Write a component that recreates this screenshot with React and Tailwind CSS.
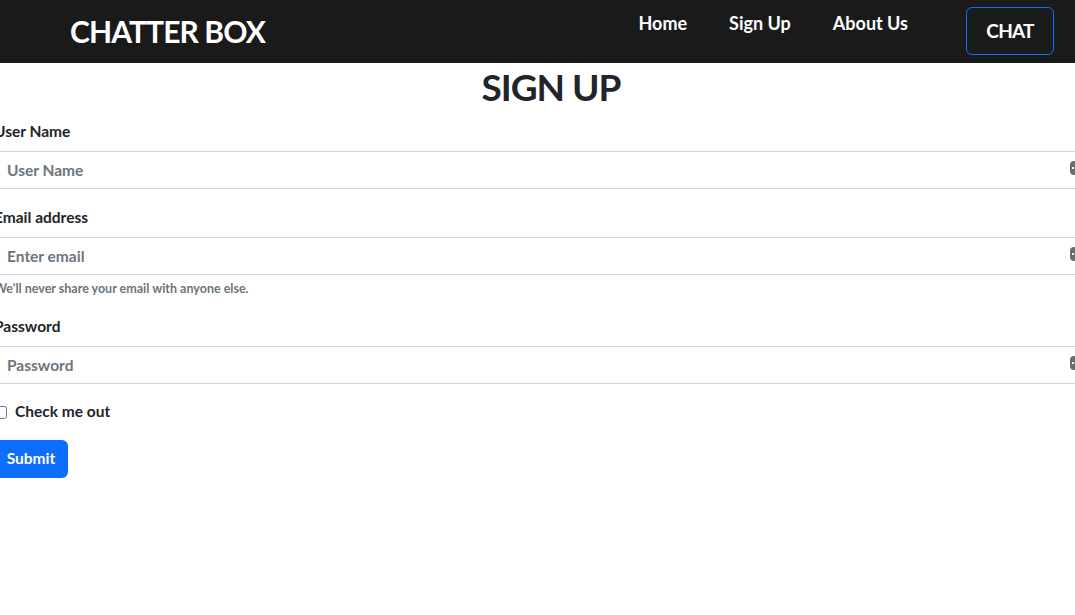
import React from "react";

const font = { fontFamily: "Lato, 'Noto Sans', sans-serif" };

const Field = ({ label, placeholder, type = "text", help }) => (
  <div className="mb-4">
    <label className="mb-2 block text-[15.5px] leading-6 font-bold text-[#212529]">{label}</label>
    <div className="relative">
      <input
        type={type}
        placeholder={placeholder}
        className="block h-[38px] w-full rounded-md border border-[#ced4da] bg-white px-3 text-[15.5px] font-bold text-[#212529] outline-none placeholder:text-[#6c757d]"
      />
      {/* autofill helper icon cut by right edge */}
      <span className="absolute top-[10px] left-[1076px] flex h-[14px] w-[8px] items-center rounded-sm bg-[#6b6b6b]">
        <span className="ml-[2px] h-[2px] w-[2px] bg-white" />
      </span>
    </div>
    {help && <div className="mt-1 text-[12.5px] leading-[19px] font-bold text-[#6c757d]">{help}</div>}
  </div>
);

export default function App() {
  return (
    <div className="h-[615px] w-[1075px] overflow-hidden bg-white" style={font}>
      <nav className="flex h-[63px] items-start bg-[#1b1a1b]">
        <div className="ml-[70px] pt-[11px] text-[30px] leading-[40px] font-bold tracking-[-0.9px] text-white">
          CHATTER BOX
        </div>
        <div className="ml-auto flex gap-[42px] pt-[9px] text-[18px] leading-7 font-bold text-white">
          <a>Home</a>
          <a>Sign Up</a>
          <a>About Us</a>
        </div>
        <button className="mt-[7px] mr-[21px] ml-[58px] h-[48px] w-[88px] rounded-md border border-[#0d6efd] text-[19px] font-bold tracking-[-0.8px] text-white">
          CHAT
        </button>
      </nav>

      <div className="-ml-[6px] w-[1114px]">
        <h1 className="mb-2 text-center text-[37px] leading-[48px] font-bold tracking-[-1px] text-[#212529]">SIGN UP</h1>
        <form>
          <Field label="User Name" placeholder="User Name" />
          <Field
            label="Email address"
            placeholder="Enter email"
            type="email"
            help="We'll never share your email with anyone else."
          />
          <Field label="Password" placeholder="Password" type="password" />
          <div className="mb-4 flex h-6 items-center gap-[8px]">
            <input type="checkbox" className="h-[13px] w-[13px]" />
            <span className="text-[15.5px] font-bold text-[#212529]">Check me out</span>
          </div>
          <button type="button" className="h-[38px] w-[74px] rounded-md bg-[#0d6efd] text-[15.5px] font-bold text-white">
            Submit
          </button>
        </form>
      </div>
    </div>
  );
}
